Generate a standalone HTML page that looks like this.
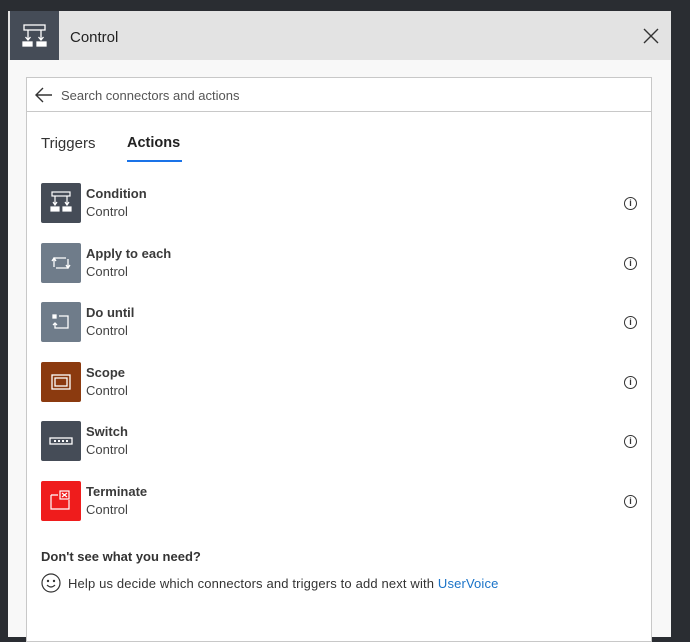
<!DOCTYPE html>
<html><head><style>
*{margin:0;padding:0;box-sizing:border-box}
body{width:690px;height:641px;background:#2a2d32;font-family:"Liberation Sans",sans-serif;position:relative;overflow:hidden}
#panel{position:absolute;left:8px;top:11px;width:663px;height:626px;background:#f8f8f8}
#hdr{position:absolute;left:0;top:0;width:663px;height:49px;background:#e3e3e3}
#hicon{position:absolute;left:2px;top:0;width:49px;height:49px;background:#454c57}
#htitle{position:absolute;left:62px;top:18px;font-size:15px;color:#222}
#close{position:absolute;left:635px;top:17px}
#search{position:absolute;left:18px;top:66px;width:626px;height:35px;background:#fff;border:1px solid #c8c8c8}
#search span{position:absolute;left:34px;top:10px;font-size:13px;color:#555}
#body{position:absolute;left:18px;top:101px;width:626px;height:530px;background:#fff;border:1px solid #c8c8c8;border-top:none}
.tab{position:absolute;top:23px;font-size:15px;color:#333}
.item{position:absolute;left:14px;width:600px;height:40px}
.ic{position:absolute;left:0;top:0;width:40px;height:40px;border-radius:2px}
.t1{position:absolute;left:45px;top:3px;font-size:13px;font-weight:bold;color:#3a3a3a}
.t2{position:absolute;left:45px;top:21px;font-size:13px;color:#444}
.info{position:absolute;left:583px;top:14px;width:13px;height:13px;border:1px solid #333;border-radius:50%;font-size:9px;text-align:center;line-height:11px;color:#333;font-weight:bold}
</style></head><body>
<div id="panel">
<div id="hdr">
<div id="hicon"><svg width="49" height="49" viewBox="0 0 49 49" fill="none" stroke="#fff" stroke-width="1.3"><rect x="14" y="14" width="21" height="5"/><path d="M18 19v10M31 19v10M15.5 26l2.5 3 2.5-3M28.5 26l2.5 3 2.5-3"/><rect x="13" y="31" width="9" height="4" fill="#fff"/><rect x="27" y="31" width="9" height="4" fill="#fff"/></svg></div>
<div id="htitle">Control</div>
<svg id="close" width="16" height="16" viewBox="0 0 16 16" stroke="#333" stroke-width="1.4"><path d="M1 1l14 14M15 1L1 15"/></svg>
</div>
<div id="search"><svg style="position:absolute;left:8px;top:8px" width="18" height="18" viewBox="0 0 18 18" fill="none" stroke="#333" stroke-width="1.4"><path d="M17 9H2M8 2L1 9l7 7"/></svg><span>Search connectors and actions</span></div>
<div id="body">
<div class="tab" style="left:14px">Triggers</div>
<div class="tab" style="left:100px;color:#222;font-weight:bold;font-size:14.5px">Actions</div>
<div style="position:absolute;left:100px;top:48px;width:55px;height:2px;background:#1a73e8"></div>

<div class="item" style="top:71px"><div class="ic" style="background:#454c57"><svg width="40" height="40" viewBox="0 0 40 40" fill="none" stroke="#fff" stroke-width="1.2"><rect x="11" y="9" width="18" height="4"/><path d="M14 13v9M26 13v9M12 19l2 3 2-3M24 19l2 3 2-3"/><rect x="10" y="24" width="8" height="4" fill="#fff"/><rect x="22" y="24" width="8" height="4" fill="#fff"/></svg></div><div class="t1">Condition</div><div class="t2">Control</div><div class="info">i</div></div>

<div class="item" style="top:131px"><div class="ic" style="background:#6f7c8a"><svg width="40" height="40" viewBox="0 0 40 40" fill="none" stroke="#fff" stroke-width="1.3"><path d="M13 24v-9h12M27 16v9H15M11 18l2-3 2 3M25 22l2 3 2-3"/></svg></div><div class="t1">Apply to each</div><div class="t2">Control</div><div class="info">i</div></div>

<div class="item" style="top:190px"><div class="ic" style="background:#6f7c8a"><svg width="40" height="40" viewBox="0 0 40 40" fill="none" stroke="#fff" stroke-width="1.3"><rect x="12" y="13" width="3" height="3" fill="#fff"/><path d="M18 14h9v12H14v-5M12 23l2-2 2 2"/></svg></div><div class="t1">Do until</div><div class="t2">Control</div><div class="info">i</div></div>

<div class="item" style="top:250px"><div class="ic" style="background:#8b3a0f"><svg width="40" height="40" viewBox="0 0 40 40" fill="none" stroke="#fff" stroke-width="1.3"><rect x="11" y="13" width="18" height="14"/><rect x="14" y="16" width="12" height="8"/></svg></div><div class="t1">Scope</div><div class="t2">Control</div><div class="info">i</div></div>

<div class="item" style="top:309px"><div class="ic" style="background:#454c57"><svg width="40" height="40" viewBox="0 0 40 40" fill="none" stroke="#fff" stroke-width="1.3"><rect x="9" y="17" width="22" height="6"/><path d="M13 20h2M17 20h2M21 20h2M25 20h2" stroke-width="2"/></svg></div><div class="t1">Switch</div><div class="t2">Control</div><div class="info">i</div></div>

<div class="item" style="top:369px"><div class="ic" style="background:#ef1c1c"><svg width="40" height="40" viewBox="0 0 40 40" fill="none" stroke="#fff" stroke-width="1.2"><path d="M10 14h7M10 14v14h18v-9"/><rect x="19" y="10" width="9" height="8"/><path d="M21 12l5 4M26 12l-5 4"/></svg></div><div class="t1">Terminate</div><div class="t2">Control</div><div class="info">i</div></div>

<div style="position:absolute;left:14px;top:437px;font-size:13px;font-weight:bold;color:#333">Don't see what you need?</div>
<svg style="position:absolute;left:14px;top:461px" width="20" height="20" viewBox="0 0 20 20" fill="none" stroke="#333" stroke-width="1.2"><circle cx="10" cy="10" r="9"/><circle cx="7" cy="8" r=".6" fill="#333"/><circle cx="13" cy="8" r=".6" fill="#333"/><path d="M6 12q4 4 8 0"/></svg>
<div style="position:absolute;left:41px;top:464px;font-size:13px;color:#333;letter-spacing:0.15px">Help us decide which connectors and triggers to add next with <span style="color:#1a73c8">UserVoice</span></div>
</div>
</div>
</body></html>
